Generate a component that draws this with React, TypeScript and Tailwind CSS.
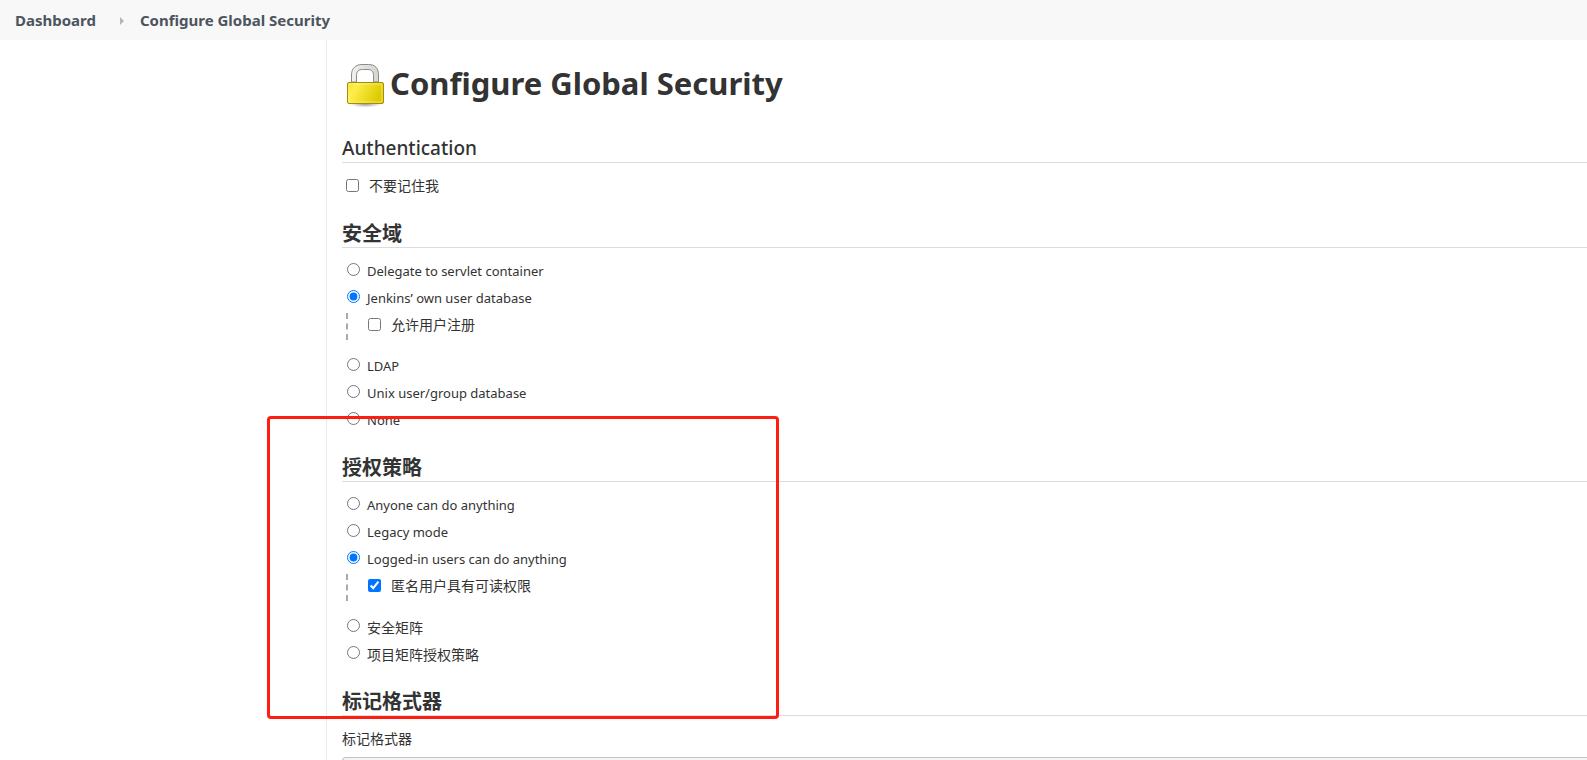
import type { ReactNode } from "react";

function Lock() {
  return (
    <svg width="48" height="48" viewBox="0 0 48 48" aria-hidden="true" className="shrink-0">
      <defs>
        <linearGradient id="lock-body" x1="0" x2="1" y1="0" y2="0.3">
          <stop offset="0" stopColor="#f5e02c" />
          <stop offset="0.25" stopColor="#ffee4a" />
          <stop offset="1" stopColor="#dccb00" />
        </linearGradient>
        <radialGradient id="lock-shadow">
          <stop offset="0" stopColor="#000" stopOpacity="0.4" />
          <stop offset="1" stopColor="#000" stopOpacity="0" />
        </radialGradient>
        <linearGradient id="lock-shackle" x1="0" x2="1" y1="0" y2="0">
          <stop offset="0" stopColor="#f2f3f1" />
          <stop offset="0.5" stopColor="#dfe1dc" />
          <stop offset="1" stopColor="#d3d7cf" />
        </linearGradient>
      </defs>
      <ellipse cx="23.5" cy="42" rx="16" ry="3.5" fill="url(#lock-shadow)" />
      <path
        d="M9.500 20V13C9.500 6 14 2.500 20 2.500H26.500C33 2.500 36.500 6 36.500 13V20H31.500V13.500C31.500 9.500 29.500 7.500 26 7.500H20.500C16.500 7.500 14.500 9.500 14.500 13.500V20Z"
        fill="url(#lock-shackle)"
        stroke="#8a8c87"
      />
      <rect x="5.500" y="20.500" width="36" height="21" rx="1.500" fill="url(#lock-body)" stroke="#a88b08" />
      <rect x="7" y="22" width="33" height="18" rx="1" fill="none" stroke="#fff79a" strokeOpacity="0.6" />
    </svg>
  );
}

function Section({ title, latin, children }: { title: string; latin?: boolean; children: ReactNode }) {
  return (
    <section>
      <h2
        className={
          "flex h-12 items-end border-b border-[#dcdcdc] " +
          (latin ? "text-[19px] leading-7 font-medium" : "text-xl leading-[26px] font-bold")
        }
      >
        {title}
      </h2>
      <div className="pt-2.5">{children}</div>
    </section>
  );
}

function Radio({
  group,
  label,
  checked,
  cjk,
  children,
}: {
  group: string;
  label: string;
  checked?: boolean;
  cjk?: boolean;
  children?: ReactNode;
}) {
  return (
    <>
      <label className="flex h-[27px] items-center gap-[7px] pl-[5px]">
        <input type="radio" name={group} defaultChecked={checked} className="mb-1 size-[13px] shrink-0" />
        <span className={cjk ? "text-sm" : "text-[13px]"}>{label}</span>
      </label>
      {children && (
        <div className="mb-4 ml-1 flex h-[25px]">
          <svg width="2" height="27" aria-hidden="true" className="mt-px shrink-0">
            <path d="M1 0V27" stroke="#aaa" strokeWidth="2" strokeDasharray="6 4.500" />
          </svg>
          <div className="pl-5">{children}</div>
        </div>
      )}
    </>
  );
}

function Check({ label, checked }: { label: string; checked?: boolean }) {
  return (
    <label className="flex h-[25px] items-center gap-2.5 text-sm">
      <input type="checkbox" defaultChecked={checked} className="size-[13px] shrink-0" />
      <span>{label}</span>
    </label>
  );
}

export default function App() {
  return (
    <div className="relative flex h-screen flex-col overflow-hidden bg-white font-['Noto_Sans','Noto_Sans_CJK_SC',sans-serif] text-sm text-[#333]">
      <nav aria-label="Breadcrumb" className="flex h-10 shrink-0 items-center bg-[#f8f8f8] px-[15px] pt-px text-[15px] font-bold text-[#4d545d]">
        <a href="#dashboard">Dashboard</a>
        <svg width="4" height="8" viewBox="0 0 4 8" aria-hidden="true" className="mr-4 ml-6">
          <path d="M0 0L4 4L0 8Z" fill="#b5b5b5" />
        </svg>
        <a href="#security">Configure Global Security</a>
      </nav>
      <div className="flex min-h-0 flex-1">
        <aside className="w-[326px] shrink-0" />
        <main className="min-w-0 flex-1 border-l border-[#e6eded] pl-[15px]">
          <h1 className="flex h-[75px] items-end pb-[5px] text-[31px] leading-[54px] font-bold">
            <Lock />
            Configure Global Security
          </h1>
          <Section title="Authentication" latin>
            <div className="pb-0.5 pl-1">
              <Check label="不要记住我" />
            </div>
          </Section>
          <Section title="安全域">
            <Radio group="realm" label="Delegate to servlet container" />
            <Radio group="realm" label="Jenkins’ own user database" checked>
              <Check label="允许用户注册" />
            </Radio>
            <Radio group="realm" label="LDAP" />
            <Radio group="realm" label="Unix user/group database" />
            <Radio group="realm" label="None" />
          </Section>
          <Section title="授权策略">
            <Radio group="strategy" label="Anyone can do anything" />
            <Radio group="strategy" label="Legacy mode" />
            <Radio group="strategy" label="Logged-in users can do anything" checked>
              <Check label="匿名用户具有可读权限" checked />
            </Radio>
            <Radio group="strategy" label="安全矩阵" cjk />
            <Radio group="strategy" label="项目矩阵授权策略" cjk />
          </Section>
          <Section title="标记格式器">
            <label htmlFor="formatter" className="flex h-[25px] items-center">
              标记格式器
            </label>
            <select
              id="formatter"
              className="mt-1.5 h-8 w-full appearance-none rounded-l-sm border border-r-0 border-[#c4c4c4] bg-[#f4f4f4]"
            />
          </Section>
        </main>
      </div>
      <div className="pointer-events-none absolute top-[416px] left-[267px] h-[303px] w-[512px] rounded border-3 border-[#ff1d12]" />
    </div>
  );
}
